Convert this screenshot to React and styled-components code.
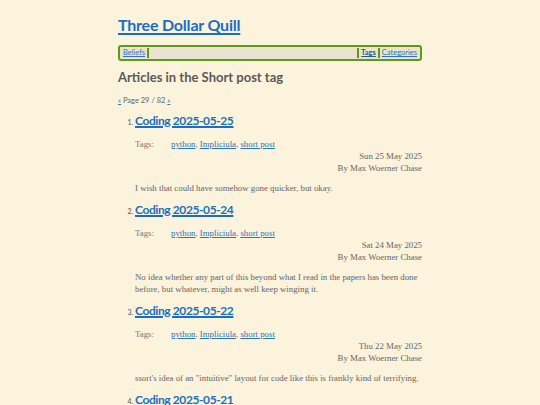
import React from "react";
import styled, { createGlobalStyle } from "styled-components";

const GlobalStyle = createGlobalStyle`
  html, body {
    margin: 0;
    padding: 0;
    background: #fbf3dc;
  }
  body {
    font-family: "Liberation Serif", serif;
    color: #555;
  }
`;

const Page = styled.div`
  width: 304px;
  margin: 0 auto;
  padding-top: 14px;
`;

const SiteTitle = styled.a`
  display: block;
  font-family: Lato, sans-serif;
  font-size: 16px;
  font-weight: 700;
  letter-spacing: -0.2px;
  line-height: 22px;
  color: #1a6fc4;
  text-decoration: underline;
  text-decoration-thickness: 2px;
  text-underline-offset: 2px;
`;

const Nav = styled.nav`
  display: flex;
  align-items: center;
  margin-top: 9px;
  height: 12px;
  border: 2px solid #5d9a1c;
  border-radius: 3px;
  background: #ebe3cf;
  padding: 0 1px;
  font-family: Lato, sans-serif;
  font-size: 7.5px;
`;

const NavLink = styled.a`
  color: ${(p) => (p.$active ? "#1c5da0" : "#2a74c0")};
  font-weight: ${(p) => (p.$active ? 700 : 400)};
  text-decoration: underline;
  padding: 0 2px;
  line-height: 10px;
  border-left: ${(p) => (p.$left ? "2px solid #5d9a1c" : "none")};
  border-right: ${(p) => (p.$right ? "2px solid #5d9a1c" : "none")};
`;

const Spacer = styled.div`
  flex: 1;
`;

const Heading = styled.h1`
  margin: 7px 0 0;
  font-family: Lato, sans-serif;
  font-size: 13px;
  line-height: 18px;
  font-weight: 700;
  color: #5a5a5a;
`;

const Pager = styled.div`
  margin-top: 9px;
  height: 10px;
  font-family: Lato, sans-serif;
  font-size: 7.5px;
  line-height: 10px;
  color: #666;
  a {
    color: #2a74c0;
    text-decoration: underline;
    font-size: 7px;
  }
`;

const List = styled.ol`
  margin: 6px 0 0;
  padding-left: 17px;
  font-size: 8.8px;
  line-height: 12px;
  li::marker {
    font-family: Lato, sans-serif;
    font-size: 7px;
    color: #555;
  }
`;

const Item = styled.li`
  margin-bottom: 6px;
`;

const PostTitle = styled.a`
  display: inline-block;
  font-family: Lato, sans-serif;
  font-size: 12px;
  font-weight: 700;
  letter-spacing: -0.4px;
  line-height: 20px;
  color: #1a6fc4;
  text-decoration: underline;
  text-decoration-thickness: 1.5px;
`;

const TagRow = styled.div`
  display: grid;
  grid-template-columns: 36px 1fr;
  margin-top: 7px;
  color: #777;
`;

const TagLink = styled.a`
  color: #2a74c0;
  text-decoration: underline;
`;

const Meta = styled.div`
  text-align: right;
  color: #666;
`;

const Summary = styled.p`
  margin: 8px 0 0;
  color: #666;
`;

const posts = [
  {
    title: "Coding 2025-05-25",
    date: "Sun 25 May 2025",
    text: "I wish that could have somehow gone quicker, but okay.",
  },
  {
    title: "Coding 2025-05-24",
    date: "Sat 24 May 2025",
    text: "No idea whether any part of this beyond what I read in the papers has been done before, but whatever, might as well keep winging it.",
  },
  {
    title: "Coding 2025-05-22",
    date: "Thu 22 May 2025",
    text: "ssort's idea of an \"intuitive\" layout for code like this is frankly kind of terrifying.",
  },
  {
    title: "Coding 2025-05-21",
    date: "Wed 21 May 2025",
    text: "",
  },
];

const tags = ["python", "Impliciula", "short post"];

export default function App() {
  return (
    <>
      <GlobalStyle />
      <Page>
        <SiteTitle href="#">Three Dollar Quill</SiteTitle>
        <Nav>
          <NavLink href="#" $right>
            Beliefs
          </NavLink>
          <Spacer />
          <NavLink href="#" $active $left $right>
            Tags
          </NavLink>
          <NavLink href="#">Categories</NavLink>
        </Nav>
        <Heading>Articles in the Short post tag</Heading>
        <Pager>
          <a href="#">«</a> Page 29 / 82 <a href="#">»</a>
        </Pager>
        <List>
          {posts.map((p) => (
            <Item key={p.title}>
              <PostTitle href="#">{p.title}</PostTitle>
              <TagRow>
                <span>Tags:</span>
                <span>
                  {tags.map((t, i) => (
                    <React.Fragment key={t}>
                      <TagLink href="#">{t}</TagLink>
                      {i < tags.length - 1 ? ", " : ""}
                    </React.Fragment>
                  ))}
                </span>
              </TagRow>
              <Meta>{p.date}</Meta>
              <Meta>By Max Woerner Chase</Meta>
              <Summary>{p.text}</Summary>
            </Item>
          ))}
        </List>
      </Page>
    </>
  );
}
